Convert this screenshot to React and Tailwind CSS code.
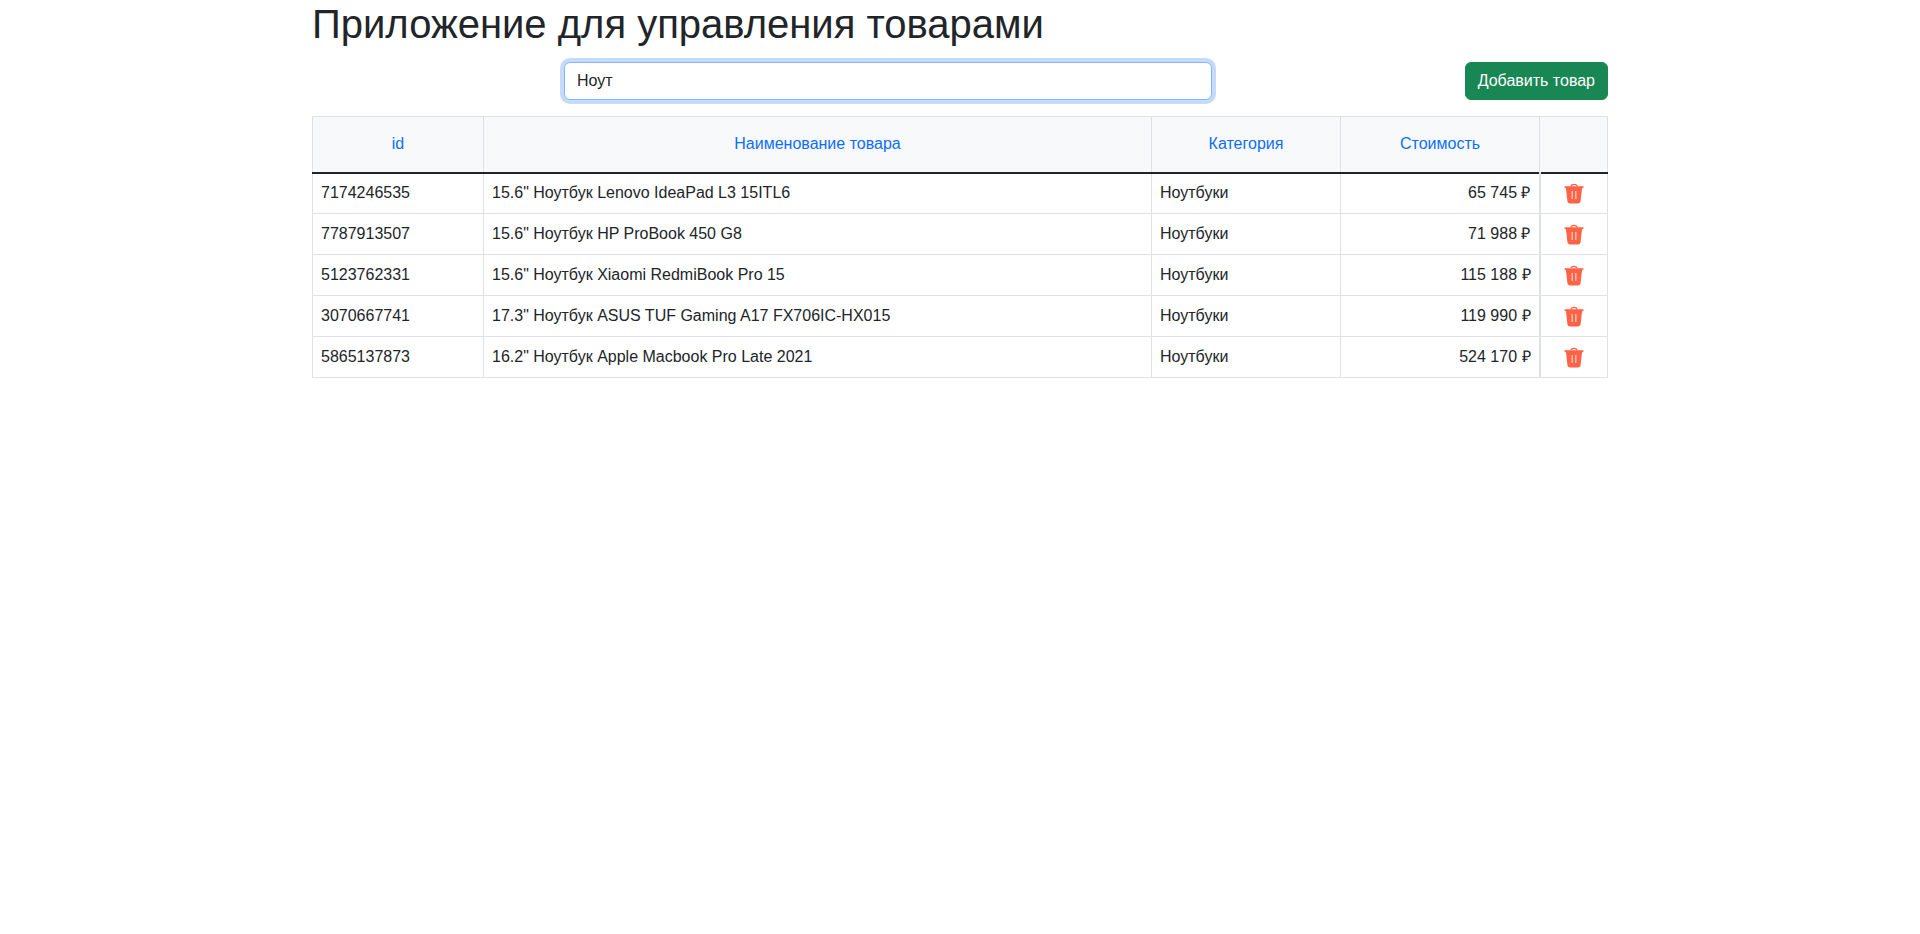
const rows = [
  ["7174246535", '15.6" Ноутбук Lenovo IdeaPad L3 15ITL6', "Ноутбуки", "65 745 ₽"],
  ["7787913507", '15.6" Ноутбук HP ProBook 450 G8', "Ноутбуки", "71 988 ₽"],
  ["5123762331", '15.6" Ноутбук Xiaomi RedmiBook Pro 15', "Ноутбуки", "115 188 ₽"],
  ["3070667741", '17.3" Ноутбук ASUS TUF Gaming A17 FX706IC-HX015', "Ноутбуки", "119 990 ₽"],
  ["5865137873", '16.2" Ноутбук Apple Macbook Pro Late 2021', "Ноутбуки", "524 170 ₽"],
];

function Trash() {
  return (
    <svg width="20" height="21" viewBox="0 0 20 21" className="block mx-auto">
      <path d="M7 3.5 C7 0.6 13 0.6 13 3.5" fill="none" stroke="#ff6347" strokeWidth="1.3" />
      <path d="M0.5 3.2 H19.5 V4.6 L18 5.6 L16.6 18 C16.4 19.6 15.4 20.5 14 20.5 H6 C4.6 20.5 3.6 19.6 3.4 18 L2 5.6 L0.5 4.6 Z" fill="#ff6347" />
      <path d="M8.2 8 V16 M11.8 8 V16" stroke="#ffc9bd" strokeWidth="1.3" />
    </svg>
  );
}

const th = "border border-[#dee2e6] border-b-0 bg-[#f8f9fa] p-0 h-[56px] font-normal text-center text-[#0d6efd]";
const td = "border border-[#dee2e6] px-2 h-[41px] align-middle";

export default function App() {
  return (
    <div className="w-[1320px] mx-auto px-3 bg-white text-[16px] leading-6 text-[#212529] font-['Liberation_Sans',Arial,sans-serif]">
      <h1 className="text-[40px] leading-[48px] font-medium">Приложение для управления товарами</h1>
      <div className="flex items-center mt-[14px] mb-4">
        <input
          readOnly
          value="Ноут"
          className="ml-[252px] w-[648px] h-[38px] px-3 rounded-md border border-[#86b7fe] bg-white text-[#212529] outline-none shadow-[0_0_0_4px_rgba(13,110,253,0.25)]"
        />
        <button className="ml-auto h-[38px] px-3 rounded-md bg-[#198754] border border-[#198754] text-white">
          Добавить товар
        </button>
      </div>
      <table className="w-[1295px] table-fixed border-collapse">
        <thead>
          <tr className="border-b-2 border-b-[#212529]">
            <th className={th + " w-[171px]"}>id</th>
            <th className={th + " w-[668px]"}>Наименование товара</th>
            <th className={th + " w-[189px]"}>Категория</th>
            <th className={th + " w-[199px]"}>Стоимость</th>
            <th className={th + " w-[68px]"}></th>
          </tr>
        </thead>
        <tbody>
          {rows.map((r) => (
            <tr key={r[0]}>
              <td className={td}>{r[0]}</td>
              <td className={td}>{r[1]}</td>
              <td className={td}>{r[2]}</td>
              <td className={td + " text-right border-r-2"}>{r[3]}</td>
              <td className={td}><Trash /></td>
            </tr>
          ))}
        </tbody>
      </table>
    </div>
  );
}
